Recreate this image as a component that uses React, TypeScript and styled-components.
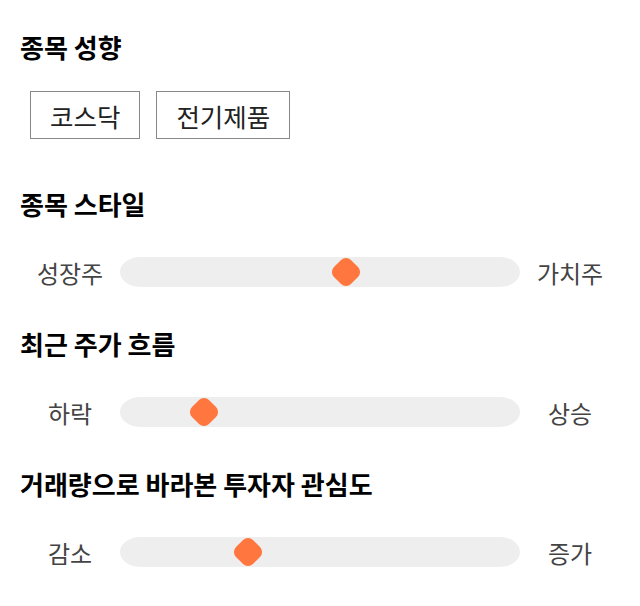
import React from 'react';
import styled, { createGlobalStyle } from 'styled-components';

const GlobalStyle = createGlobalStyle`
  html, body {
    margin: 0;
    padding: 0;
    background: #ffffff;
  }
  body {
    font-family: "Noto Sans CJK KR", "Noto Sans", sans-serif;
  }
`;

interface ISlider {
  left: string;
  right: string;
  value: number;
}

const tags = ['코스닥', '전기제품'];

const sliders: { title: string; slider: ISlider }[] = [
  { title: '종목 스타일', slider: { left: '성장주', right: '가치주', value: 0.565 } },
  { title: '최근 주가 흐름', slider: { left: '하락', right: '상승', value: 0.21 } },
  { title: '거래량으로 바라본 투자자 관심도', slider: { left: '감소', right: '증가', value: 0.32 } },
];

const App = () => {
  return (
    <>
      <GlobalStyle />
      <Page>
        <Section>
          <Heading>종목 성향</Heading>
          <TagRow>
            {tags.map((tag) => (
              <Tag key={tag}>{tag}</Tag>
            ))}
          </TagRow>
        </Section>
        {sliders.map(({ title, slider }) => (
          <Section key={title}>
            <Heading>{title}</Heading>
            <SliderRow>
              <SideLabel>{slider.left}</SideLabel>
              <Track>
                <Thumb style={{ left: `${slider.value * 100}%` }} />
              </Track>
              <SideLabel>{slider.right}</SideLabel>
            </SliderRow>
          </Section>
        ))}
      </Page>
    </>
  );
};

const Page = styled.div`
  width: 640px;
  box-sizing: border-box;
  padding: 30px 20px 20px;
  display: flex;
  flex-direction: column;
  gap: 31px;
`;

const Section = styled.section`
  display: flex;
  flex-direction: column;
  gap: 27px;
`;

const Heading = styled.h2`
  margin: 0;
  font-size: 26px;
  line-height: 34px;
  font-weight: 700;
  color: #000000;
`;

const TagRow = styled.div`
  display: flex;
  gap: 16px;
  padding-left: 10px;
  padding-bottom: 17px;
`;

const Tag = styled.div`
  height: 48px;
  box-sizing: border-box;
  padding: 0 19px;
  display: flex;
  align-items: center;
  border: 1px solid #888888;
  font-size: 25.5px;
  color: #222222;
`;

const SliderRow = styled.div`
  display: grid;
  grid-template-columns: 100px 1fr 100px;
  align-items: center;
  height: 48px;
`;

const SideLabel = styled.span`
  text-align: center;
  font-size: 24px;
  color: #444444;
`;

const Track = styled.div`
  position: relative;
  height: 30px;
  background: #eeeeee;
  border-radius: 20px / 15px;
`;

const Thumb = styled.div`
  position: absolute;
  top: 50%;
  width: 24px;
  height: 24px;
  border-radius: 7px;
  background: #ff763f;
  transform: translate(-50%, -50%) rotate(45deg);
`;

export default App;
